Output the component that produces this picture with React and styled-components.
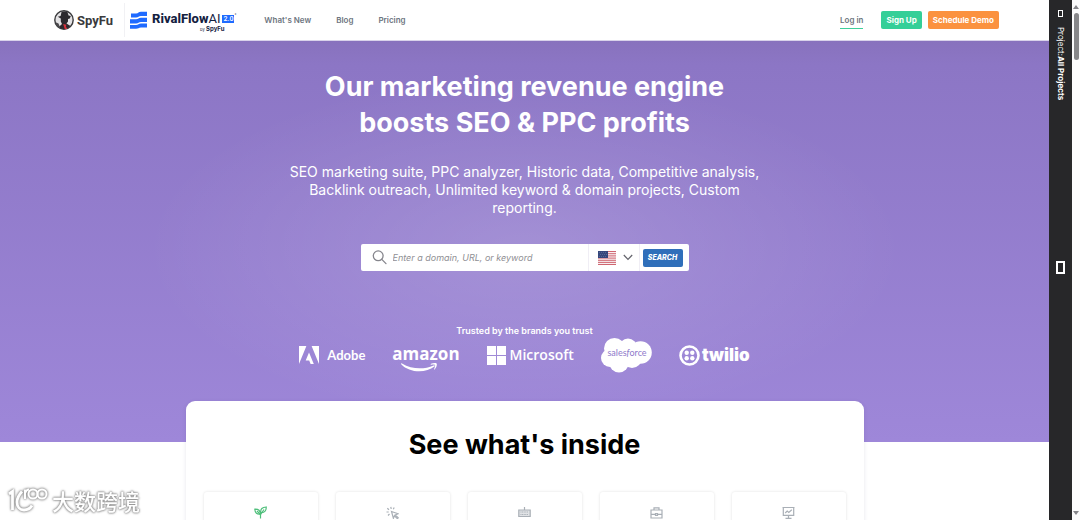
import React, { useState } from 'react';
import styled, { createGlobalStyle } from 'styled-components';

const GlobalStyle = createGlobalStyle`
  * { box-sizing: border-box; }
  body {
    margin: 0;
    background: #fff;
    font-family: Inter, "Liberation Sans", sans-serif;
    overflow: hidden;
  }
  a { color: inherit; text-decoration: none; }
  button, input, select { font-family: inherit; margin: 0; }
  h1, h2, p { margin: 0; }
  svg { display: block; flex: none; }
`;

const Page = styled.div`
  display: flex;
  height: 100vh;
  overflow: hidden;
`;

const Main = styled.main`
  flex: 1;
  min-width: 0;
  overflow: hidden;
`;

/* header */
const Header = styled.header`
  display: flex;
  align-items: center;
  height: 41px;
  padding: 0 50px 0 54px;
  background: #fff;
  border-bottom: 1px solid #d9d3ea;
`;

const Brand = styled.a`
  display: flex;
  align-items: center;
  gap: 3px;
  padding-right: 11px;
`;

const BrandName = styled.span`
  font-family: Roboto, sans-serif;
  font-size: 13px;
  font-weight: 700;
  color: #3a3a3c;
`;

const RivalBrand = styled.a`
  display: flex;
  align-items: center;
  gap: 5px;
  height: 34px;
  padding-left: 5px;
  border-left: 1px solid #f1f1f4;
`;

const RivalWords = styled.span`
  display: flex;
  flex-direction: column;
  align-items: center;
  padding-top: 4px;
  color: #14213f;
`;

const RivalTitle = styled.span`
  display: flex;
  align-items: center;
  font-size: 13px;
  line-height: 14px;
  font-weight: 800;
  font-family: Roboto, sans-serif;

  i { font-style: normal; font-weight: 400; }
  sup { font-size: 5px; line-height: 6px; align-self: flex-start; }
`;

const Version = styled.b`
  margin-left: 2px;
  padding: 0 1px;
  background: #1f6bff;
  color: #fff;
  font-size: 7px;
  line-height: 8px;
  font-weight: 500;
`;

const RivalBy = styled.span`
  padding-left: 36px;
  font-size: 6px;
  line-height: 6px;
  font-weight: 700;

  small { font-size: 4px; font-weight: 400; }
`;

const Nav = styled.nav`
  display: flex;
  gap: 25px;
  margin-left: 28px;
  font-size: 8px;
  line-height: 16px;
  font-weight: 600;
  color: #6d7580;
`;

const Actions = styled.div`
  display: flex;
  align-items: center;
  gap: 6px;
  margin-left: auto;
`;

const LoginLink = styled.a`
  margin-right: 12px;
  padding-top: 2px;
  font-size: 8px;
  line-height: 15px;
  font-weight: 600;
  color: #6d7580;
  border-bottom: 1px solid #3ecf9b;
`;

const PillButton = styled.button`
  height: 18px;
  padding: 0 5px;
  border: 0;
  border-radius: 2px;
  background: ${(p) => p.$color};
  color: #fff;
  font-size: 8px;
  font-weight: 700;
  white-space: nowrap;
`;

/* hero */
const Hero = styled.section`
  display: flex;
  flex-direction: column;
  align-items: center;
  padding: 28px 20px 69px;
  color: #fff;
  text-align: center;
  background:
    radial-gradient(ellipse 380px 175px at 50% 52%, rgba(255, 255, 255, 0.14), rgba(255, 255, 255, 0)),
    linear-gradient(#8872bd 0, #8c76c5 24px, #9e87d9 100%);
`;

const Title = styled.h1`
  max-width: 480px;
  font-size: 27px;
  line-height: 36px;
  font-weight: 700;
`;

const Lead = styled.p`
  max-width: 480px;
  margin-top: 22px;
  font-size: 14px;
  line-height: 18px;
  font-weight: 400;
`;

const SearchBar = styled.form`
  display: flex;
  align-items: center;
  width: 100%;
  max-width: 328px;
  height: 27px;
  margin-top: 27px;
  padding: 0 6px 0 11px;
  border-radius: 2px;
  background: #fff;
`;

const SearchInput = styled.input`
  flex: 1;
  min-width: 0;
  height: 27px;
  padding: 0 6px;
  border: 0;
  outline: 0;
  background: none;
  font-size: 9px;
  font-style: italic;
  color: #555;

  &::placeholder { color: #8f8f94; opacity: 1; }
`;

const CountryPicker = styled.button`
  display: flex;
  align-items: center;
  gap: 7px;
  height: 27px;
  margin-right: 3px;
  padding: 0 6px 0 9px;
  border: solid #f0eef5;
  border-width: 0 1px;
  background: none;
`;

const SearchButton = styled.button`
  width: 40px;
  height: 18px;
  padding: 0;
  border: 0;
  border-radius: 2px;
  background: #2f6fba;
  color: #fff;
  font-size: 7px;
  font-style: italic;
  font-weight: 800;
`;

const Trusted = styled.p`
  margin-top: 54px;
  font-size: 9px;
  line-height: 12px;
  font-weight: 600;
`;

const Brands = styled.div`
  display: flex;
  align-items: center;
  justify-content: center;
  gap: 27px;
  height: 36px;
`;

const BrandLogo = styled.span`
  display: flex;
  flex-direction: ${(p) => (p.$stacked ? 'column' : 'row')};
  align-items: ${(p) => (p.$stacked ? 'flex-start' : 'center')};
  gap: ${(p) => p.$gap || 0}px;
  padding-top: ${(p) => (p.$stacked ? 7 : 0)}px;
  font-family: ${(p) => p.$font || '"Open Sans"'}, sans-serif;
  font-size: ${(p) => p.$size}px;
  line-height: 18px;
  font-weight: ${(p) => p.$weight || 600};
`;

/* features */
const Inside = styled.section`
  max-width: 678px;
  min-height: 300px;
  margin: -41px auto 0;
  padding: 26px 18px;
  border-radius: 9px;
  background: #fff;
  box-shadow: 0 1px 4px rgba(60, 50, 100, 0.12);
`;

const InsideTitle = styled.h2`
  font-size: 27px;
  line-height: 36px;
  font-weight: 700;
  text-align: center;
  color: #000;
`;

const Tiles = styled.div`
  display: grid;
  grid-template-columns: repeat(5, 1fr);
  gap: 18px;
  margin-top: 29px;
`;

const Tile = styled.button`
  display: flex;
  justify-content: center;
  height: 90px;
  padding: 14px 0;
  border: 0;
  border-radius: 3px;
  background: #fff;
  color: ${(p) => (p.$active ? '#4fbf7b' : '#a9afb6')};
  box-shadow: 0 0 3px rgba(0, 0, 0, 0.12);
`;

/* right edge */
const Rail = styled.aside`
  display: flex;
  flex-direction: column;
  align-items: center;
  width: 23px;
  padding-top: 10px;
  background: #272729;
  color: #fff;
`;

const RailButton = styled.button`
  width: ${(p) => (p.$large ? 9 : 5)}px;
  height: ${(p) => (p.$large ? 13 : 7)}px;
  padding: 0;
  border: ${(p) => (p.$large ? 2 : 1)}px solid #fff;
  background: none;
`;

const RailLabel = styled.span`
  height: 234px;
  margin-top: 10px;
  writing-mode: vertical-rl;
  font-size: 8px;
  line-height: 10px;
`;

const ScrollTrack = styled.div`
  display: flex;
  flex-direction: column;
  align-items: center;
  width: 8px;
  padding: 5px 0 4px;
  background: #fbfbfc;
  color: #85858a;
`;

const ScrollThumb = styled.div`
  width: 5px;
  height: 47px;
  margin: 3px 0 auto;
  border-radius: 3px;
  background: #87878a;
`;

const Watermark = styled.div`
  position: fixed;
  left: 8px;
  bottom: 6px;
  display: flex;
  align-items: center;
  gap: 4px;
  color: #fff;
  font: 500 22px/28px "Noto Sans CJK SC", sans-serif;
  text-shadow: 0 0 2px #888, 0 0 2px #999, 0 0 3px #999;

  svg { filter: drop-shadow(0 0 1px #888) drop-shadow(0 0 1px #aaa); }
`;

const SpyIcon = () => (
  <svg width="20" height="20" viewBox="0 0 20 20">
    <circle cx="10" cy="10" r="9.2" fill="#e4e3e5" stroke="#3a3a3c" strokeWidth="1.400" />
    <path d="M3.800 6.800 6.600 6 7.600 1.800Q10.500.9 13.400 2L14.600 5.600 16.800 6 15.800 8.400 14 9 14 11.500 12.500 13.500 16.500 16A9.200 9.200 0 0 1 4.500 17.300L8 14 6.800 11.500 6.800 8.600Z" fill="#2b292d" />
    <path d="M1.200 12 4.500 13.500 6.500 18.500Q2.500 17 1.200 12Z" fill="#4a484b" />
    <path d="m9.200 14 3.200.8-.6 2 1.600 2-2.600.5Z" fill="#d9303b" />
  </svg>
);

const RivalIcon = () => (
  <svg width="17" height="18" viewBox="0 0 17 18" fill="#1f6bff">
    <path d="M1 2.500H6C8.500 2.500 8.500.8 11 .8H17V5H11C8.500 5 8.500 6.600 6 6.600H1Z" />
    <path d="M0 8.300H6C8.500 8.300 8.500 6.700 11 6.700H17V10.900H11C8.500 10.900 8.500 12.400 6 12.400H0Z" />
    <path d="M0 14H6C8.500 14 8.500 12.600 11 12.600H17V16.400H11C8.500 16.400 8.500 17.700 6 17.700H0Z" />
  </svg>
);

const SearchIcon = () => (
  <svg width="15" height="15" viewBox="0 0 15 15" fill="none" stroke="#85858c" strokeWidth="1.3">
    <circle cx="6.2" cy="5.8" r="4.9" />
    <path d="m9.8 9.4 4.2 4.2" strokeLinecap="round" />
  </svg>
);

const UsFlag = () => (
  <svg width="18" height="14" viewBox="0 0 18 14">
    <path fill="#f7eef0" d="M0 0h18v14H0z" />
    <path d="M0 .5h18M0 2.7h18M0 4.9h18M0 7.1h18M0 9.3h18M0 11.4h18M0 13.5h18" stroke="#cf6570" />
    <path fill="#35477c" d="M0 0h10v7H0z" />
    <path d="M1 1.5h8M2 3.5h7M1 5.5h8" stroke="#6b7aa5" strokeWidth=".6" strokeDasharray="1 1" />
  </svg>
);

const Chevron = () => (
  <svg width="10" height="7" viewBox="0 0 10 7" fill="none" stroke="#63636b" strokeWidth="1.2">
    <path d="m.8 1 4.2 4.4L9.2 1" />
  </svg>
);

const AdobeIcon = () => (
  <svg width="20" height="18" viewBox="0 0 20 18" fill="#fff">
    <path d="M0 0h7.4L0 18ZM12.6 0H20v18ZM10 6.6 14.8 18h-3.2l-1.4-3.6H6.7Z" />
  </svg>
);

const AmazonSmile = () => (
  <svg width="50" height="9" viewBox="-6 0 50 9" fill="#fff">
    <path d="M4 .4C14 6.500 26 6.600 35.600 2.400c1-.4 1.600.5.8 1.200C28 10.200 11.500 10.200 3.200 1.200 2.700.6 3.300 0 4 .4Z" />
    <path d="M33 .8C35 0 37.700-.2 38.600.5c.7 1-.2 4.200-2 6-.4.300-.7.100-.5-.3.500-1.200 1.400-3.700.9-4.200-.6-.6-2.700-.4-3.900-.2-.5 0-.6-.6-.1-1Z" />
  </svg>
);

const MicrosoftIcon = () => (
  <svg width="19" height="19" viewBox="0 0 19 19" fill="#fff">
    <path d="M0 0h9v9H0zM10 0h9v9h-9zM0 10h9v9H0zM10 10h9v9h-9z" />
  </svg>
);

const SalesforceCloud = () => (
  <svg width="51" height="36" viewBox="0 0 51 36" fill="#fff">
    <circle cx="13.500" cy="11.500" r="10.500" />
    <circle cx="27" cy="10.500" r="9" />
    <circle cx="39.500" cy="15.500" r="11.300" />
    <circle cx="9" cy="21" r="9" />
    <circle cx="18" cy="25.500" r="10" />
    <circle cx="31" cy="21" r="10" />
    <text x="26" y="19" textAnchor="middle" fontFamily="Lato, sans-serif" fontSize="9" fill="#8f7acb">
      sales<tspan fontStyle="italic">f</tspan>orce
    </text>
  </svg>
);

const TwilioIcon = () => (
  <svg width="21" height="21" viewBox="0 0 21 21">
    <circle cx="10.500" cy="10.500" r="9" fill="none" stroke="#fff" strokeWidth="2.600" />
    <g fill="#fff">
      <circle cx="7.700" cy="7.700" r="2.200" />
      <circle cx="13.300" cy="7.700" r="2.200" />
      <circle cx="7.700" cy="13.300" r="2.200" />
      <circle cx="13.300" cy="13.300" r="2.200" />
    </g>
  </svg>
);

const TileIcon = ({ children }) => (
  <svg width="13" height="13" viewBox="0 0 13 13" fill="none" stroke="currentColor" strokeWidth="1.200">
    {children}
  </svg>
);

const tiles = [
  {
    name: 'SEO',
    icon: (
      <>
        <path d="M6.500 12.500V7.500M6.500 8C3 8.600 1 6.800.8 3.200 4 3 6.200 4.500 6.500 8ZM6.800 6.500C6.300 3 8.300 1.200 12.200 1 12.400 4.800 10.300 7 6.800 6.500Z" />
        <path d="m3 5 3.500 3.500L10 3.500" />
      </>
    ),
  },
  {
    name: 'PPC',
    icon: (
      <>
        <path d="m5.500 5.500 6.500 2.200-2.700 1.200 2.900 2.900-.9.800-2.900-2.800-1 2.500Z" />
        <path d="M4.800.8 5.200 3M1.300 2.300 3 3.800M.5 6h2.200M2 9.500 3.500 8M8.200 1.500 7.300 3.300" />
      </>
    ),
  },
  {
    name: 'Keywords',
    icon: (
      <>
        <path d="M6.500 1v3" />
        <path d="M.8 4h11.400v6.500H.8Z" fill="currentColor" fillOpacity=".35" />
        <path d="M2.500 6h8M2.500 8.500h8" strokeDasharray="1 .6" />
      </>
    ),
  },
  {
    name: 'Agencies',
    icon: (
      <>
        <path d="M1 4h11v8H1ZM4 4V1.800h5V4M1 8.300h4.500M7.500 8.300H12" />
        <path d="M5.500 7.500h2v1.800h-2Z" />
      </>
    ),
  },
  {
    name: 'Reporting',
    icon: (
      <>
        <path d="M.5 1.500h12M1.300 1.500v7.800h10.400V1.500M6.500 9.300V12M3.500 12.300h6" />
        <path d="m3.200 7 2-2 1.600 1.400 3-2.700" />
      </>
    ),
  },
];

const App = () => {
  const [query, setQuery] = useState('');
  const [active, setActive] = useState('SEO');

  return (
    <>
      <GlobalStyle />
      <Page>
        <Main>
          <Header>
            <Brand href="#home">
              <SpyIcon />
              <BrandName>SpyFu</BrandName>
            </Brand>
            <RivalBrand href="#rivalflow">
              <RivalIcon />
              <RivalWords>
                <RivalTitle>RivalFlow<i>AI</i><Version>2.0</Version><sup>°</sup></RivalTitle>
                <RivalBy><small>by</small> SpyFu</RivalBy>
              </RivalWords>
            </RivalBrand>
            <Nav>
              <a href="#new">What's New</a>
              <a href="#blog">Blog</a>
              <a href="#pricing">Pricing</a>
            </Nav>
            <Actions>
              <LoginLink href="#login">Log in</LoginLink>
              <PillButton $color="#35cf98">Sign Up</PillButton>
              <PillButton $color="#fb923f">Schedule Demo</PillButton>
            </Actions>
          </Header>

          <Hero>
            <Title>Our marketing revenue engine boosts SEO &amp; PPC profits</Title>
            <Lead>
              SEO marketing suite, PPC analyzer, Historic data, Competitive analysis,
              Backlink outreach, Unlimited keyword &amp; domain projects, Custom reporting.
            </Lead>
            <SearchBar onSubmit={(e) => e.preventDefault()}>
              <SearchIcon />
              <SearchInput
                aria-label="Enter a domain, URL, or keyword"
                placeholder="Enter a domain, URL, or keyword"
                value={query}
                onChange={(e) => setQuery(e.target.value)}
              />
              <CountryPicker type="button" aria-label="Country" aria-haspopup="listbox">
                <UsFlag />
                <Chevron />
              </CountryPicker>
              <SearchButton type="submit">SEARCH</SearchButton>
            </SearchBar>
            <Trusted>Trusted by the brands you trust</Trusted>
            <Brands>
              <BrandLogo $size={13} $gap={8} $weight={700} $font="Lato"><AdobeIcon />Adobe</BrandLogo>
              <BrandLogo $size={17} $weight={700} $stacked>amazon<AmazonSmile /></BrandLogo>
              <BrandLogo $size={14} $gap={4}><MicrosoftIcon />Microsoft</BrandLogo>
              <SalesforceCloud />
              <BrandLogo $size={17} $gap={2} $weight={900} $font="Inter"><TwilioIcon />twilio</BrandLogo>
            </Brands>
          </Hero>

          <Inside>
            <InsideTitle>See what's inside</InsideTitle>
            <Tiles>
              {tiles.map((t) => (
                <Tile
                  key={t.name}
                  aria-label={t.name}
                  $active={t.name === active}
                  onClick={() => setActive(t.name)}
                >
                  <TileIcon>{t.icon}</TileIcon>
                </Tile>
              ))}
            </Tiles>
          </Inside>
        </Main>

        <Rail>
          <RailButton aria-label="Open projects" />
          <RailLabel>Project:<b>All Projects</b></RailLabel>
          <RailButton $large aria-label="Expand panel" />
        </Rail>
        <ScrollTrack>
          <svg width="6" height="5" viewBox="0 0 6 5" fill="currentColor"><path d="M3 0 6 4H0Z" /></svg>
          <ScrollThumb />
          <svg width="6" height="5" viewBox="0 0 6 5" fill="currentColor"><path d="M0 0h6L3 4Z" /></svg>
        </ScrollTrack>
      </Page>

      <Watermark>
        <svg width="40" height="28" viewBox="0 0 40 28" fill="none" stroke="#fff" strokeWidth="2.800">
          <path d="M1 8 4.500 5.500V24M14 5.500Q9 11 9 16C9 21 12 24 16 24 20 24 22.500 22 24 19.500" />
          <path d="M17 13V3.500M17 7Q18.500 3.500 21 3.500" strokeWidth="2" />
          <circle cx="25" cy="8" r="4.500" strokeWidth="2" />
          <circle cx="34" cy="8" r="4.500" strokeWidth="2" />
        </svg>
        大数跨境
      </Watermark>
    </>
  );
};

export default App;
